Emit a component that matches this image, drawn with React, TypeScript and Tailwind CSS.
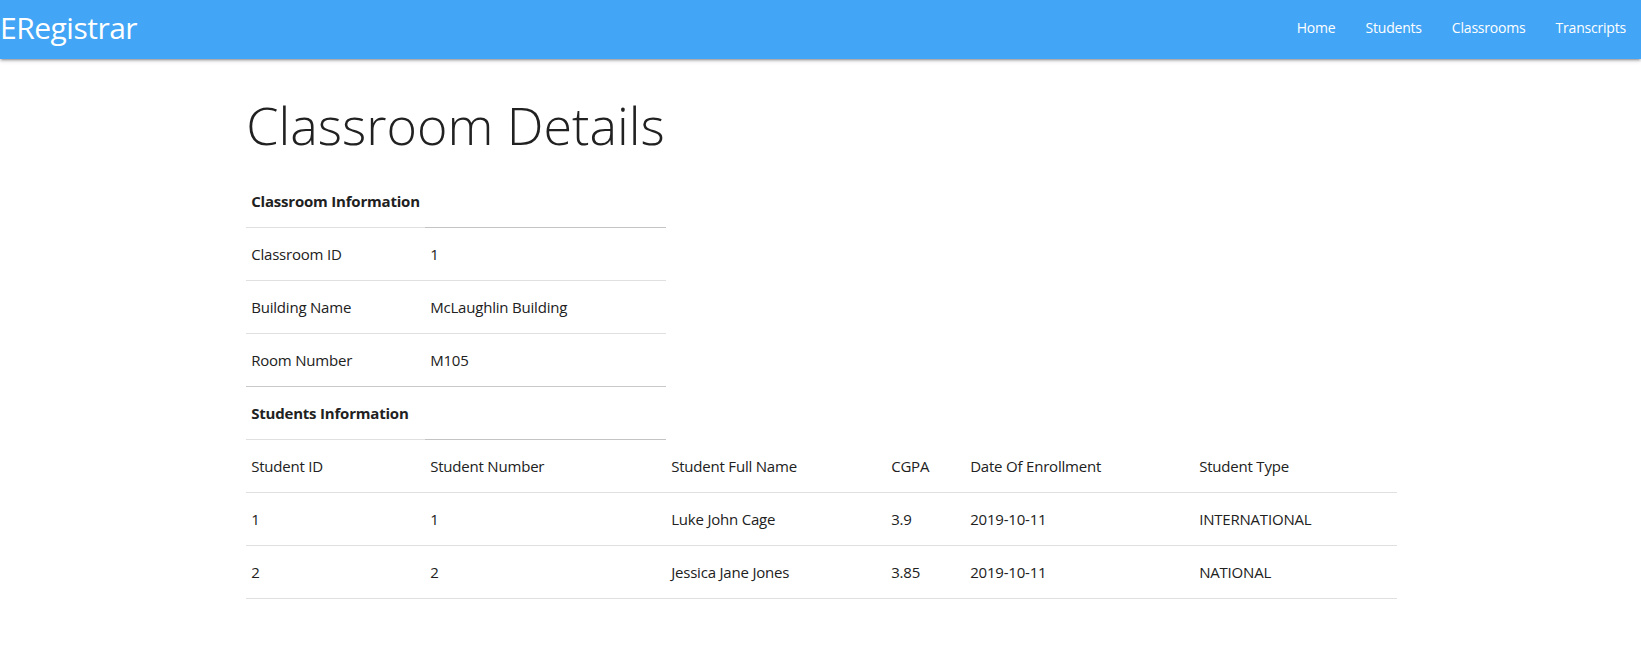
const navLinks = ['Home', 'Students', 'Classrooms', 'Transcripts'];

const classroomRows = [
  ['Classroom ID', '1'],
  ['Building Name', 'McLaughlin Building'],
  ['Room Number', 'M105'],
];

const studentHeaders = [
  'Student ID',
  'Student Number',
  'Student Full Name',
  'CGPA',
  'Date Of Enrollment',
  'Student Type',
];

const students = [
  ['1', '1', 'Luke John Cage', '3.9', '2019-10-11', 'INTERNATIONAL'],
  ['2', '2', 'Jessica Jane Jones', '3.85', '2019-10-11', 'NATIONAL'],
];

const colWidths = ['w-[179px]', 'w-[241px]', 'w-[220px]', 'w-[79px]', 'w-[229px]', 'w-[203px]'];

export default function App() {
  return (
    <div className="min-h-screen bg-white font-['Open_Sans',sans-serif] text-[15px] leading-[22px] tracking-[-0.2px] text-[#212121]">
      {/* Navbar */}
      <nav className="h-[59px] bg-[#42a5f5] shadow-[0_2px_2px_0_rgba(0,0,0,0.14),0_3px_1px_-2px_rgba(0,0,0,0.12),0_1px_5px_0_rgba(0,0,0,0.2)]">
        <div className="flex h-[56px] items-center justify-between">
          <a href="#" className="text-[30px] leading-none tracking-[-0.5px] text-white">
            ERegistrar
          </a>
          <ul className="flex">
            {navLinks.map((l) => (
              <li key={l}>
                <a href="#" className="block px-[15px] text-[14px] tracking-[-0.2px] text-white">
                  {l}
                </a>
              </li>
            ))}
          </ul>
        </div>
      </nav>

      <main className="mx-auto w-[70%]">
        <h3 className="mt-[37px] mb-[22px] text-[52px] leading-[57px] font-light tracking-normal text-[#212121]">
          Classroom Details
        </h3>

        {/* Classroom info */}
        <table className="w-[420px] border-collapse text-left">
          <thead>
            <tr>
              <th className="w-[179px] whitespace-nowrap border-b border-[#e0e0e0] px-[5px] py-[15px] font-bold">
                Classroom Information
              </th>
              <th className="w-[241px] border-b border-[#c4c4c4]"></th>
            </tr>
          </thead>
          <tbody>
            {classroomRows.map(([k, v], i) => (
              <tr
                key={k}
                className={i === classroomRows.length - 1 ? 'border-b border-[#c8c8c8]' : 'border-b border-[#e0e0e0]'}
              >
                <td className="w-[179px] px-[5px] py-[15px]">{k}</td>
                <td className="w-[241px] px-[5px] py-[15px]">{v}</td>
              </tr>
            ))}
          </tbody>
        </table>

        <table className="w-[420px] border-collapse text-left">
          <thead>
            <tr>
              <th className="w-[179px] whitespace-nowrap border-b border-[#e0e0e0] px-[5px] py-[15px] font-bold">
                Students Information
              </th>
              <th className="w-[241px] border-b border-[#c4c4c4]"></th>
            </tr>
          </thead>
        </table>

        {/* Students table */}
        <table className="w-full table-fixed border-collapse text-left">
          <thead>
            <tr className="border-b border-[#e0e0e0]">
              {studentHeaders.map((h, i) => (
                <th key={h} className={`${colWidths[i]} px-[5px] py-[15px] font-normal`}>
                  {h}
                </th>
              ))}
            </tr>
          </thead>
          <tbody>
            {students.map((row) => (
              <tr key={row[0]} className="border-b border-[#e0e0e0]">
                {row.map((c, i) => (
                  <td key={i} className="px-[5px] py-[15px]">
                    {c}
                  </td>
                ))}
              </tr>
            ))}
          </tbody>
        </table>
      </main>
    </div>
  );
}
